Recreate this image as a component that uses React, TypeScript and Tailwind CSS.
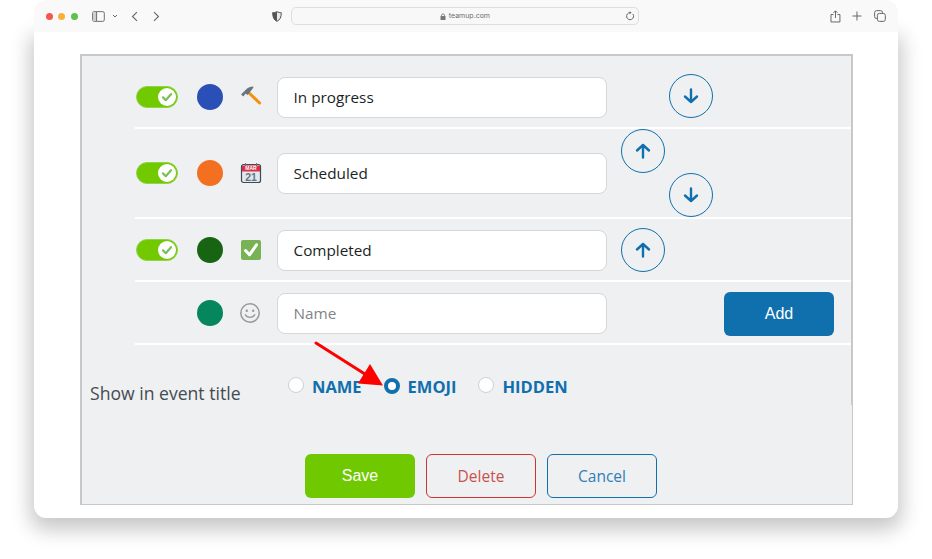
import React from "react";

const openSans = "font-['Open_Sans','Liberation_Sans',sans-serif]";

function Toggle() {
  return (
    <div className="w-[42px] h-[22px] rounded-full bg-[#72c900] border border-[#8fd44a] flex items-center justify-end pr-[1px] shrink-0">
      <div className="w-[18px] h-[18px] rounded-full bg-white flex items-center justify-center">
        <svg width="12" height="12" viewBox="0 0 12 12" fill="none">
          <path d="M2 6.4 L4.8 9.2 L10 3.2" stroke="#7bbf57" strokeWidth="2.2" strokeLinecap="round" strokeLinejoin="round" />
        </svg>
      </div>
    </div>
  );
}

function Dot({ color }: { color: string }) {
  return <div className={`w-[26px] h-[26px] rounded-full shrink-0 ${color}`} />;
}

function Hammer() {
  return (
    <svg width="24" height="24" viewBox="-1 0 24 24" fill="none" className="shrink-0">
      <path d="M8 7 L19.6 18" stroke="#f4900c" strokeWidth="3" strokeLinecap="round" />
      <path d="M1 9.5 L5.5 5 C7.5 3 10 1.5 13 1.5 L13.5 2.5 L10 7 L7.5 10 L5.5 8.5 L3.5 11.5 Z" fill="#66757f" />
    </svg>
  );
}

function CalendarIcon() {
  return (
    <svg width="22" height="22" viewBox="0 0 22 22" fill="none">
      <rect x="1.5" y="2.5" width="19" height="18" rx="2" fill="#e1e8ed" stroke="#3f4a55" strokeWidth="1.2" />
      <rect x="2" y="3.5" width="18" height="6" fill="#dd2e44" />
      <path d="M5.5 1 V5 M16.5 1 V5" stroke="#66757f" strokeWidth="1" />
      <text x="11" y="8.4" textAnchor="middle" fontSize="5" fontWeight="700" fill="#fff" fontFamily="Liberation Sans, sans-serif">MAR</text>
      <text x="11" y="19.2" textAnchor="middle" fontSize="10.5" fontWeight="700" fill="#66757f" fontFamily="Liberation Sans, sans-serif">21</text>
    </svg>
  );
}

function CheckIcon() {
  return (
    <svg width="22" height="22" viewBox="0 0 22 22" fill="none">
      <rect x="1" y="1" width="20" height="20" rx="2" fill="#77b255" />
      <path d="M5.5 11.5 L9.5 15.8 L16.5 5.8" stroke="#fff" strokeWidth="3" strokeLinecap="round" strokeLinejoin="round" />
    </svg>
  );
}

function Smile() {
  return (
    <svg width="22" height="22" viewBox="0 0 22 22" fill="none">
      <circle cx="10" cy="11" r="9.2" stroke="#999" strokeWidth="1.5" />
      <circle cx="6.8" cy="8.8" r="1.2" fill="#999" />
      <circle cx="13.2" cy="8.8" r="1.2" fill="#999" />
      <path d="M5.3 12.8 C7 16.2 13 16.2 14.7 12.8" stroke="#999" strokeWidth="1.4" strokeLinecap="round" />
    </svg>
  );
}

function Arrow({ up, className }: { up?: boolean; className?: string }) {
  return (
    <div className={`w-[44px] h-[44px] rounded-full border border-[#106fad] flex items-center justify-center ${className ?? ""}`}>
      <svg width="16" height="16" viewBox="0 0 16 16" fill="none" className={up ? "rotate-180" : ""}>
        <path d="M8 1.5 V14 M2 8.5 L8 14 L14 8.5" stroke="#106fad" strokeWidth="2.4" strokeLinecap="round" strokeLinejoin="round" />
      </svg>
    </div>
  );
}

function TextBox({ value, placeholder }: { value?: string; placeholder?: string }) {
  return (
    <div className={`w-[330px] h-[41px] rounded-lg bg-white border border-[#d6d7d9] flex items-center pl-[15.5px] text-[15.3px] ${openSans} ${placeholder ? "text-[#7f8487]" : "text-[#1c1f24]"}`}>
      {value ?? placeholder}
    </div>
  );
}

function RowLead({ icon, dot, toggle, value, placeholder, top }: { icon: React.ReactNode; dot: string; toggle?: boolean; value?: string; placeholder?: string; top: string }) {
  return (
    <div className={`flex items-center h-[41px] shrink-0 ${top}`}>
      <div className="w-[42px] ml-[1px] mb-[2px] shrink-0">{toggle && <Toggle />}</div>
      <div className="ml-[19px] mb-[2px]"><Dot color={dot} /></div>
      <div className="ml-[17px] mb-[2px] w-[22px] h-[24px] flex items-center justify-center shrink-0">{icon}</div>
      <div className="ml-[15px]"><TextBox value={value} placeholder={placeholder} /></div>
    </div>
  );
}

function Radio({ label, checked }: { label: string; checked?: boolean }) {
  return (
    <div className="flex items-center">
      {checked ? (
        <div className="w-[16px] h-[16px] rounded-full border-[4.5px] border-[#106fad] bg-white -mt-[3px]" />
      ) : (
        <div className="w-[16px] h-[16px] rounded-full border border-[#cfd0d2] bg-white -mt-[4px]" />
      )}
      <span className={`ml-[8px] text-[16.5px] font-bold leading-[22px] text-[#106fad] ${openSans}`}>{label}</span>
    </div>
  );
}

export default function App() {
  return (
    <div className="relative w-[932px] h-[559px] bg-white overflow-hidden pl-[34px]">
      <div className="w-[864px]">
        <div className="relative z-10 h-[32px] rounded-t-xl bg-[#f9f9f9] flex items-center pl-[12px] pr-[12px]">
          <div className="w-[7px] h-[7px] rounded-full bg-[#f5574f]" />
          <div className="ml-[5.5px] w-[7px] h-[7px] rounded-full bg-[#f8b13d]" />
          <div className="ml-[5.5px] w-[7px] h-[7px] rounded-full bg-[#5dc14c]" />
          <svg className="ml-[14px]" width="13" height="11" viewBox="0 0 13 11" fill="none">
            <rect x="0.6" y="0.6" width="11.8" height="9.8" rx="1.6" stroke="#6f6f6f" strokeWidth="1" />
            <rect x="1" y="1" width="3.6" height="9" fill="#cfcfcf" />
            <path d="M4.6 1 V10" stroke="#6f6f6f" />
          </svg>
          <svg className="ml-[7px]" width="6" height="6" viewBox="0 0 6 6" fill="none">
            <path d="M1 2 L3 4 L5 2" stroke="#666" strokeWidth="1" />
          </svg>
          <svg className="ml-[13px]" width="7" height="11" viewBox="0 0 7 11" fill="none">
            <path d="M6 1 L1.5 5.5 L6 10" stroke="#666" strokeWidth="1.1" />
          </svg>
          <svg className="ml-[15px]" width="7" height="11" viewBox="0 0 7 11" fill="none">
            <path d="M1 1 L5.5 5.5 L1 10" stroke="#666" strokeWidth="1.1" />
          </svg>
          <svg className="ml-[112px]" width="10" height="11" viewBox="0 0 10 11" fill="none">
            <path d="M5 0.6 C6.5 1.5 8 1.6 9.3 1.6 C9.5 6 8 9 5 10.4 C2 9 0.5 6 0.7 1.6 C2 1.6 3.5 1.5 5 0.6 Z" fill="#e8e8e8" stroke="#555" strokeWidth="1" />
            <path d="M5 0.6 C3.5 1.5 2 1.6 0.7 1.6 C0.5 6 2 9 5 10.4 Z" fill="#555" />
          </svg>
          <div className="ml-[9px] w-[351px] h-[18px] rounded-[5px] border border-[#dedede] bg-[#f8f8f8] flex items-center relative justify-center">
            <svg width="6" height="7" viewBox="0 0 6 7" fill="none">
              <rect x="0.5" y="3" width="5" height="4" rx="0.5" fill="#777" />
              <path d="M1.5 3 V2 C1.5 0.5 4.5 0.5 4.5 2 V3" stroke="#777" strokeWidth="0.8" />
            </svg>
            <span className="ml-[3px] text-[7px] leading-[10px] text-[#6d6d6d] font-['Inter',sans-serif]">teamup.com</span>
            <svg className="absolute right-[3px] top-[3px]" width="10" height="10" viewBox="0 0 10 10" fill="none">
              <path d="M7.8 3 A3.5 3.5 0 1 1 5 1.7" stroke="#666" strokeWidth="1" />
              <path d="M4.6 0.2 L6.6 1.8 L4.6 3.2 Z" fill="#666" />
            </svg>
          </div>
          <svg className="ml-[191px]" width="11" height="13" viewBox="0 0 11 13" fill="none">
            <path d="M3.5 4.5 H1 V12 H10 V4.5 H7.5 M5.5 8 V1 M3.5 2.8 L5.5 0.8 L7.5 2.8" stroke="#666" strokeWidth="1" />
          </svg>
          <svg className="ml-[11px]" width="10" height="10" viewBox="0 0 10 10" fill="none">
            <path d="M5 0.5 V9.5 M0.5 5 H9.5" stroke="#666" strokeWidth="1" />
          </svg>
          <svg className="ml-[12px]" width="12" height="12" viewBox="0 0 12 12" fill="none">
            <rect x="0.6" y="0.6" width="8" height="8" rx="2" stroke="#666" strokeWidth="1" />
            <rect x="3.4" y="3.4" width="8" height="8" rx="2" fill="#f9f9f9" stroke="#666" strokeWidth="1" />
          </svg>
        </div>
        <div className="h-[486px] bg-white rounded-b-xl shadow-[0_8px_20px_4px_rgba(0,0,0,0.22)] pt-[22px] pl-[46px]">
          <div className={`w-[773px] h-[451px] bg-[#eff0f2] border-t-2 border-l-2 border-r border-b border-[#c8c8c8] ${openSans}`}>
            <div className="h-[349px] border-r border-[#c8c8c8]">
              <div className="ml-[53px]">
                <div className="h-[73px] border-b-2 border-white flex items-start">
                  <RowLead toggle dot="bg-[#2a50b8]" icon={<Hammer />} value="In progress" top="mt-[21px]" />
                  <div className="ml-[62px] mt-[18px]"><Arrow /></div>
                </div>
                <div className="h-[90px] border-b-2 border-white flex items-start">
                  <RowLead toggle dot="bg-[#f37021]" icon={<CalendarIcon />} value="Scheduled" top="mt-[24px]" />
                  <div className="ml-[14px] w-[92px] flex flex-col">
                    <Arrow up className="self-start" />
                    <Arrow className="self-end" />
                  </div>
                </div>
                <div className="h-[63px] border-b-2 border-white flex items-start">
                  <RowLead toggle dot="bg-[#176412]" icon={<CheckIcon />} value="Completed" top="mt-[11px]" />
                  <div className="ml-[14px] mt-[9px]"><Arrow up /></div>
                </div>
                <div className="h-[63px] border-b-2 border-white flex items-start">
                  <RowLead dot="bg-[#05865c]" icon={<Smile />} placeholder="Name" top="mt-[11px]" />
                  <div className="ml-[117px] mt-[10px] w-[110px] h-[44px] rounded-md bg-[#106fad] text-white flex items-center justify-center text-[16px] font-['Liberation_Sans',sans-serif]">Add</div>
                </div>
              </div>
              <div className="flex items-start">
                <div className="ml-[8px] w-[198px] mt-[36px] text-[17.6px] leading-[24px] text-[#444b50]">Show in event title</div>
                <div className="flex items-center mt-[31px]">
                  <Radio label="NAME" />
                  <div className="ml-[22px]"><Radio label="EMOJI" checked /></div>
                  <div className="ml-[22px]"><Radio label="HIDDEN" /></div>
                </div>
              </div>
            </div>
            <div className="flex pl-[223px] pt-[49px] gap-[11px]">
              <div className="w-[110px] h-[44px] rounded-md bg-[#70c900] text-white flex items-center justify-center text-[16px] font-['Liberation_Sans',sans-serif]">Save</div>
              <div className="w-[110px] h-[44px] pt-[1px] rounded-md border border-[#cc3333] text-[#c8504f] flex items-center justify-center text-[15.5px]">Delete</div>
              <div className="w-[110px] h-[44px] pt-[1px] rounded-md border border-[#106fad] text-[#2f7fb6] flex items-center justify-center text-[15.5px]">Cancel</div>
            </div>
          </div>
        </div>
      </div>
      <svg className="absolute left-[310px] top-[336px] z-20" width="80" height="56" viewBox="0 0 80 56" fill="none">
        <path d="M6 7 L58 40" stroke="#f00" strokeWidth="3" strokeLinecap="round" />
        <path d="M73 49.5 L48 47.5 L60 28 Z" fill="#f00" />
      </svg>
    </div>
  );
}
